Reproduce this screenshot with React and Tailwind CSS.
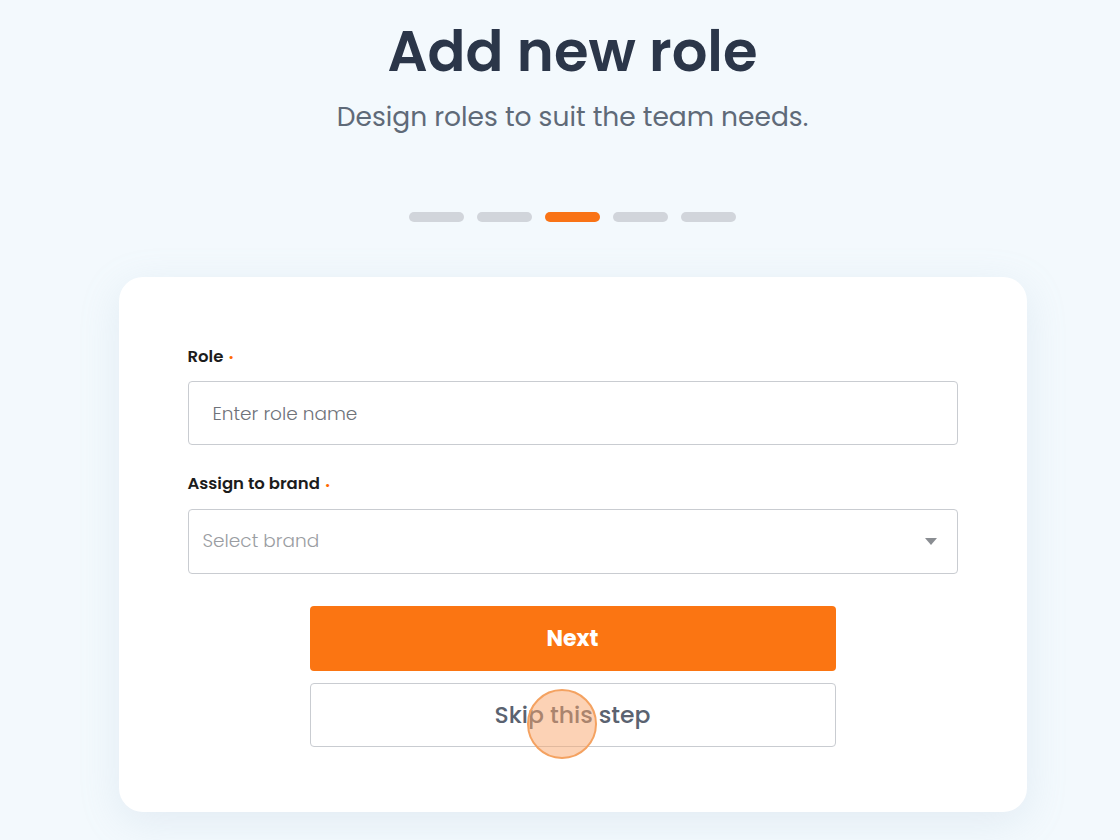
import React from "react";

function Required() {
  return <span className="ml-[5px] text-[11px] align-middle text-orange-500">•</span>;
}

export default function App() {
  const steps = [0, 1, 2, 3, 4];
  const current = 2;

  return (
    <div
      className="min-h-[840px] w-full bg-[#f3f9fd] flex flex-col items-center pl-[25px]"
      style={{ fontFamily: "Poppins, Inter, 'Noto Sans', sans-serif" }}
    >
      <h1 className="mt-[18px] text-[56px] leading-[68px] font-semibold text-[#2b3649]">Add new role</h1>
      <p className="mt-[14px] text-[26.5px] leading-[34px] text-[#5f6a78]">Design roles to suit the team needs.</p>

      {/* indicador de pasos */}
      <div className="mt-[78px] flex gap-[13px]">
        {steps.map((s) => (
          <div
            key={s}
            className={s === current ? "h-[10px] w-[55px] rounded-full bg-[#f97316]" : "h-[10px] w-[55px] rounded-full bg-[#d1d5db]"}
          />
        ))}
      </div>

      <div className="mt-[55px] w-[908px] rounded-[24px] bg-white shadow-[0_10px_40px_rgba(150,175,200,0.18)] px-[69px] pt-[68px] pb-[65px]">
        <label className="block text-[16.5px] leading-[24px] font-semibold text-[#1c1c1c]">
          Role<Required />
        </label>
        <div className="mt-[12px] h-[64px] rounded-[4px] border border-[#c9ccd1] flex items-center px-[24px]">
          <span className="text-[18.5px] font-light text-[#6f737a]">Enter role name</span>
        </div>

        <label className="mt-[27px] block text-[16.5px] leading-[24px] font-semibold text-[#1c1c1c]">
          Assign to brand<Required />
        </label>
        <div className="mt-[12px] h-[65px] rounded-[4px] border border-[#c9ccd1] flex items-center justify-between pl-[14px] pr-[20px]">
          <span className="text-[18.5px] font-light text-[#9a9da2]">Select brand</span>
          <svg width="12" height="7" viewBox="0 0 12 7">
            <path d="M0 0 L12 0 L6 7 Z" fill="#8a8d92" />
          </svg>
        </div>

        <div className="mt-[32px] flex flex-col items-center gap-[12px]">
          <button className="h-[65px] w-[526px] rounded-[4px] bg-[#fb7512] text-white text-[22px] font-bold">Next</button>
          <div className="relative">
            <button className="h-[64px] w-[526px] rounded-[4px] border border-[#c9ccd1] bg-white text-[23.5px] font-medium text-[#5a6270]">
              Skip this step
            </button>
            <div className="absolute left-[217px] top-[6px] h-[70px] w-[70px] rounded-full border-2 border-[#f4a261] bg-[#f9a66b]/50" />
          </div>
        </div>
      </div>
    </div>
  );
}
